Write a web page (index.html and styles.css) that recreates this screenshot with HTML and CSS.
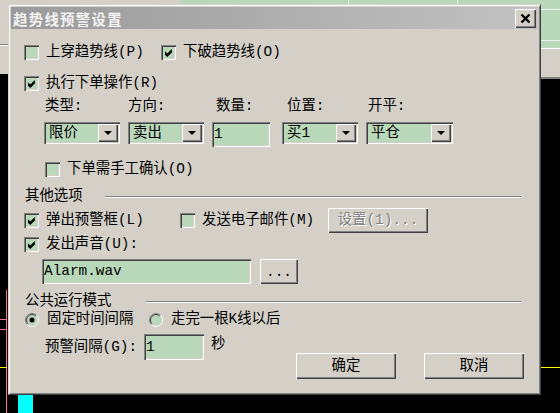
FILE: index.html
```html
<!DOCTYPE html>
<html>
<head>
<meta charset="utf-8">
<link rel="stylesheet" href="styles.css">
</head>
<body>
<div class="bg-gray-tl"><div class="bg-gray-tl-line"></div></div>
<div class="bg-green"></div>
<div class="bg-gray-r"></div>
<div class="pink-v"></div>
<div class="pink-t t1"></div>
<div class="pink-t t2"></div>
<div class="yellow-l"></div>
<div class="yellow-r"></div>
<div class="cyan"></div>

<div class="dialog">
  <div class="titlebar">
    <span class="title">趋势线预警设置</span>
    <span class="close"><svg width="21" height="19" viewBox="0 0 21 19"><path d="M6.5 5.5 L14.5 13.5 M14.5 5.5 L6.5 13.5" stroke="#000" stroke-width="2.4" fill="none"/></svg></span>
  </div>
  <div class="client">
    <div class="row row-a">
      <label class="chk w137"><span class="box"></span><span>上穿趋势线(P)</span></label>
      <label class="chk"><span class="box"><svg class="tick" width="8" height="8" viewBox="0 0 7 7"><polygon points="0,2 2,4 6,0 6,3 2,7 0,5" fill="#000"/></svg></span><span>下破趋势线(O)</span></label>
    </div>
    <div class="row row-b">
      <label class="chk"><span class="box"><svg class="tick" width="8" height="8" viewBox="0 0 7 7"><polygon points="0,2 2,4 6,0 6,3 2,7 0,5" fill="#000"/></svg></span><span>执行下单操作(R)</span></label>
    </div>
    <div class="fields">
      <div class="field f1"><span class="flabel">类型:</span><div class="combo"><span class="ctext">限价</span><span class="dd"><svg width="8" height="4" viewBox="0 0 8 4"><polygon points="0,0 8,0 4,4" fill="#000"/></svg></span></div></div>
      <div class="field f2"><span class="flabel">方向:</span><div class="combo"><span class="ctext">卖出</span><span class="dd"><svg width="8" height="4" viewBox="0 0 8 4"><polygon points="0,0 8,0 4,4" fill="#000"/></svg></span></div></div>
      <div class="field f3"><span class="flabel">数量:</span><div class="edit">1</div></div>
      <div class="field f4"><span class="flabel">位置:</span><div class="combo"><span class="ctext">买1</span><span class="dd"><svg width="8" height="4" viewBox="0 0 8 4"><polygon points="0,0 8,0 4,4" fill="#000"/></svg></span></div></div>
      <div class="field f5"><span class="flabel">开平:</span><div class="combo"><span class="ctext">平仓</span><span class="dd"><svg width="8" height="4" viewBox="0 0 8 4"><polygon points="0,0 8,0 4,4" fill="#000"/></svg></span></div></div>
    </div>
    <div class="row row-c">
      <label class="chk"><span class="box"></span><span>下单需手工确认(O)</span></label>
    </div>
    <div class="group g1"><span class="gtitle">其他选项</span><span class="gline"></span></div>
    <div class="row row-d">
      <label class="chk w156"><span class="box"><svg class="tick" width="8" height="8" viewBox="0 0 7 7"><polygon points="0,2 2,4 6,0 6,3 2,7 0,5" fill="#000"/></svg></span><span>弹出预警框(L)</span></label>
      <label class="chk w148"><span class="box"></span><span>发送电子邮件(M)</span></label>
      <span class="btn btn-set disabled">设置(1)...</span>
    </div>
    <div class="row row-e">
      <label class="chk"><span class="box"><svg class="tick" width="8" height="8" viewBox="0 0 7 7"><polygon points="0,2 2,4 6,0 6,3 2,7 0,5" fill="#000"/></svg></span><span>发出声音(U):</span></label>
    </div>
    <div class="row row-f">
      <div class="edit edit-file">Alarm.wav</div>
      <span class="btn btn-browse">...</span>
    </div>
    <div class="group g2"><span class="gtitle">公共运行模式</span><span class="gline"></span></div>
    <div class="bottom">
      <div class="left">
        <div class="row radios">
          <label class="rad w124"><svg width="14" height="14" viewBox="0 0 14 14"><circle cx="7" cy="7" r="5.5" fill="#b9d8b9"/><path d="M2.4 11.6 A6.5 6.5 0 0 1 11.6 2.4" stroke="#808080" fill="none"/><path d="M3.1 10.9 A5.5 5.5 0 0 1 10.9 3.1" stroke="#404040" fill="none"/><path d="M11.6 2.4 A6.5 6.5 0 0 1 2.4 11.6" stroke="#fff" fill="none"/><path d="M10.9 3.1 A5.5 5.5 0 0 1 3.1 10.9" stroke="#d4d0c8" fill="none"/><circle cx="7" cy="7" r="2.5" fill="#000"/></svg><span>固定时间间隔</span></label>
          <label class="rad"><svg width="14" height="14" viewBox="0 0 14 14"><circle cx="7" cy="7" r="5.5" fill="#b9d8b9"/><path d="M2.4 11.6 A6.5 6.5 0 0 1 11.6 2.4" stroke="#808080" fill="none"/><path d="M3.1 10.9 A5.5 5.5 0 0 1 10.9 3.1" stroke="#404040" fill="none"/><path d="M11.6 2.4 A6.5 6.5 0 0 1 2.4 11.6" stroke="#fff" fill="none"/><path d="M10.9 3.1 A5.5 5.5 0 0 1 3.1 10.9" stroke="#d4d0c8" fill="none"/></svg><span>走完一根K线以后</span></label>
        </div>
        <div class="row interval">
          <span class="ilabel">预警间隔(G):</span>
          <div class="edit edit-int">1</div>
          <span class="unit">秒</span>
        </div>
      </div>
      <div class="buttons">
        <span class="btn btn-main">确定</span>
        <span class="btn btn-main">取消</span>
      </div>
    </div>
  </div>
</div>
</body>
</html>
```

FILE: styles.css
```css
* { box-sizing: border-box; }
html, body { margin: 0; padding: 0; }
body {
  width: 560px;
  height: 413px;
  overflow: hidden;
  position: relative;
  background: #000;
  font-family: "Liberation Mono", "Noto Sans CJK SC", monospace;
  font-size: 14.4px;
  line-height: 17px;
  color: #000;
}

/* desktop clutter behind the dialog */
.bg-gray-tl { position: absolute; left: 0; top: 0; width: 180px; height: 74px; background: #d4d0c8; }
.bg-gray-tl-line { position: absolute; left: 0; top: 44px; width: 100%; height: 2px; border-top: 1px solid #808080; border-bottom: 1px solid #fff; }
.bg-green { position: absolute; left: 180px; top: 0; right: 0; height: 49px; background: #b9d8b9; border-bottom: 1px solid #fff;
  background-image: linear-gradient(#eaf3ea, #eaf3ea), linear-gradient(#eaf3ea, #eaf3ea), linear-gradient(#eaf3ea, #eaf3ea), linear-gradient(#eaf3ea, #eaf3ea);
  background-size: 100% 1px, 100% 1px, 1px 100%, 1px 100%;
  background-position: 0 9px, 0 40px, 168px 0, 277px 0;
  background-repeat: no-repeat; }
.bg-gray-r { position: absolute; left: 541px; top: 49px; right: 0; height: 30px; background: #d4d0c8; border-bottom: 2px solid #808080; }
.pink-v { position: absolute; left: 6px; top: 290px; width: 1px; height: 123px; background: #ff6f8f; }
.pink-t { position: absolute; left: 0; width: 7px; height: 1px; background: #ff6f8f; }
.pink-t.t1 { top: 319px; }
.pink-t.t2 { top: 329px; }
.yellow-l { position: absolute; left: 0; top: 367px; width: 7px; height: 1px; background: #ffff00; }
.yellow-r { position: absolute; left: 541px; top: 367px; width: 19px; height: 1px; background: #ffff00; }
.cyan { position: absolute; left: 18px; top: 395px; width: 15px; height: 18px; background: #00ffff; }

/* dialog */
.dialog {
  position: absolute;
  left: 8px; top: 4px;
  width: 533px; height: 391px;
  background: #d4d0c8;
  border: 1px solid;
  border-color: #d4d0c8 #404040 #404040 #d4d0c8;
  box-shadow: inset 1px 1px #fff, inset -1px -1px #808080;
  padding: 2px;
  display: flex;
  flex-direction: column;
}
.titlebar {
  height: 22px;
  flex: none;
  display: flex;
  align-items: center;
  justify-content: space-between;
  padding-left: 2px;
  background: linear-gradient(to right, #9a9a9a, #c2c2c2);
}
.title {
  font-family: "Noto Sans CJK SC", sans-serif;
  font-weight: bold;
  font-size: 14.4px;
  letter-spacing: 1.3px;
  color: #f2f2f2;
}
.close {
  width: 21px; height: 19px;
  margin-right: 2px;
  background: #d4d0c8;
  box-shadow: inset 1px 1px #fff, inset -1px -1px #404040, inset -2px -2px #808080;
  display: flex;
}
.client { flex: 1; display: flex; flex-direction: column; }

.row { display: flex; align-items: center; }
.chk, .rad { display: flex; align-items: center; gap: 7px; height: 15px; white-space: nowrap; }
.rad { gap: 8px; height: 15px; }
.box {
  width: 15px; height: 15px; flex: none;
  background: #b9d8b9;
  box-shadow: inset 1px 1px #808080, inset 2px 2px #404040, inset -1px -1px #fff, inset -2px -2px #d4d0c8;
  display: flex; align-items: center; justify-content: center;
}
.tick { margin: 1px 0 0 1px; }
.w137 { width: 137px; }
.w156 { width: 156px; }
.w148 { width: 148px; }
.w124 { width: 124px; }

.row-a { margin: 16px 0 0 13px; height: 15px; }
.row-b { margin: 16px 0 0 13px; height: 15px; }

.fields { display: flex; align-items: flex-start; margin: 7px 0 0 33px; }
.field { display: flex; flex-direction: column; gap: 7px; }
.flabel { height: 17px; white-space: nowrap; }
.f1 { width: 76px; }
.f1 .flabel { padding-left: 1px; }
.f2 { width: 76px; margin-left: 8px; }
.f3 { width: 58px; margin-left: 8px; }
.f3 .flabel { padding-left: 4px; }
.f4 { width: 76px; margin-left: 12px; }
.f4 .flabel { padding-left: 5px; }
.f5 { width: 87px; margin-left: 8px; }
.f5 .flabel { padding-left: 2px; }

.combo {
  height: 22px;
  padding: 2px;
  background: #b9d8b9;
  box-shadow: inset 1px 1px #808080, inset 2px 2px #404040, inset -1px -1px #fff, inset -2px -2px #d4d0c8;
  display: flex; align-items: center; justify-content: space-between;
}
.ctext { padding-left: 3px; white-space: nowrap; }
.dd {
  width: 20px; height: 18px;
  background: #d4d0c8;
  box-shadow: inset 1px 1px #fff, inset -1px -1px #404040, inset -2px -2px #808080;
  display: flex; align-items: center; justify-content: center;
}
.edit {
  height: 25px;
  padding: 0 0 0 2px;
  background: #b9d8b9;
  box-shadow: inset 1px 1px #808080, inset 2px 2px #404040, inset -1px -1px #fff, inset -2px -2px #d4d0c8;
  display: flex; align-items: center;
  white-space: nowrap;
}

.row-c { margin: 15px 0 0 34px; height: 15px; }

.group { display: flex; align-items: center; height: 17px; margin: 0 17px 0 14px; }
.gtitle { white-space: nowrap; flex: none; }
.gline { flex: 1; height: 2px; border-top: 1px solid #808080; border-bottom: 1px solid #fff; }
.g1 { margin-top: 11px; }
.g1 .gtitle { width: 80px; }
.g2 { margin-top: 9px; }
.g2 .gtitle { width: 121px; }

.row-d { margin: 3px 0 0 13px; height: 25px; }
.row-e { margin: 4px 0 0 13px; height: 15px; }
.row-f { margin: 7px 0 0 31px; height: 25px; }
.edit-file { width: 209px; }

.btn {
  display: flex; align-items: center; justify-content: center;
  background: #d4d0c8;
  box-shadow: inset 1px 1px #fff, inset -1px -1px #404040, inset -2px -2px #808080;
  white-space: nowrap;
}
.btn-set { width: 100px; height: 25px; }
.disabled { color: #808080; text-shadow: 1px 1px #fff; }
.btn-browse { width: 38px; height: 25px; margin-left: 9px; align-items: flex-end; padding-bottom: 3px; }

.bottom { display: flex; align-items: flex-start; margin-top: 2px; }
.left { width: 271px; margin-left: 14px; }
.radios { height: 15px; }
.interval { margin: 7px 0 0 20px; height: 26px; align-items: center; }
.ilabel { width: 99px; white-space: nowrap; }
.edit-int { width: 60px; height: 26px; }
.unit { margin-left: 7px; align-self: flex-start; margin-top: 2px; }
.buttons { display: flex; gap: 28px; margin-top: 41px; }
.btn-main { width: 100px; height: 26px; }
```
